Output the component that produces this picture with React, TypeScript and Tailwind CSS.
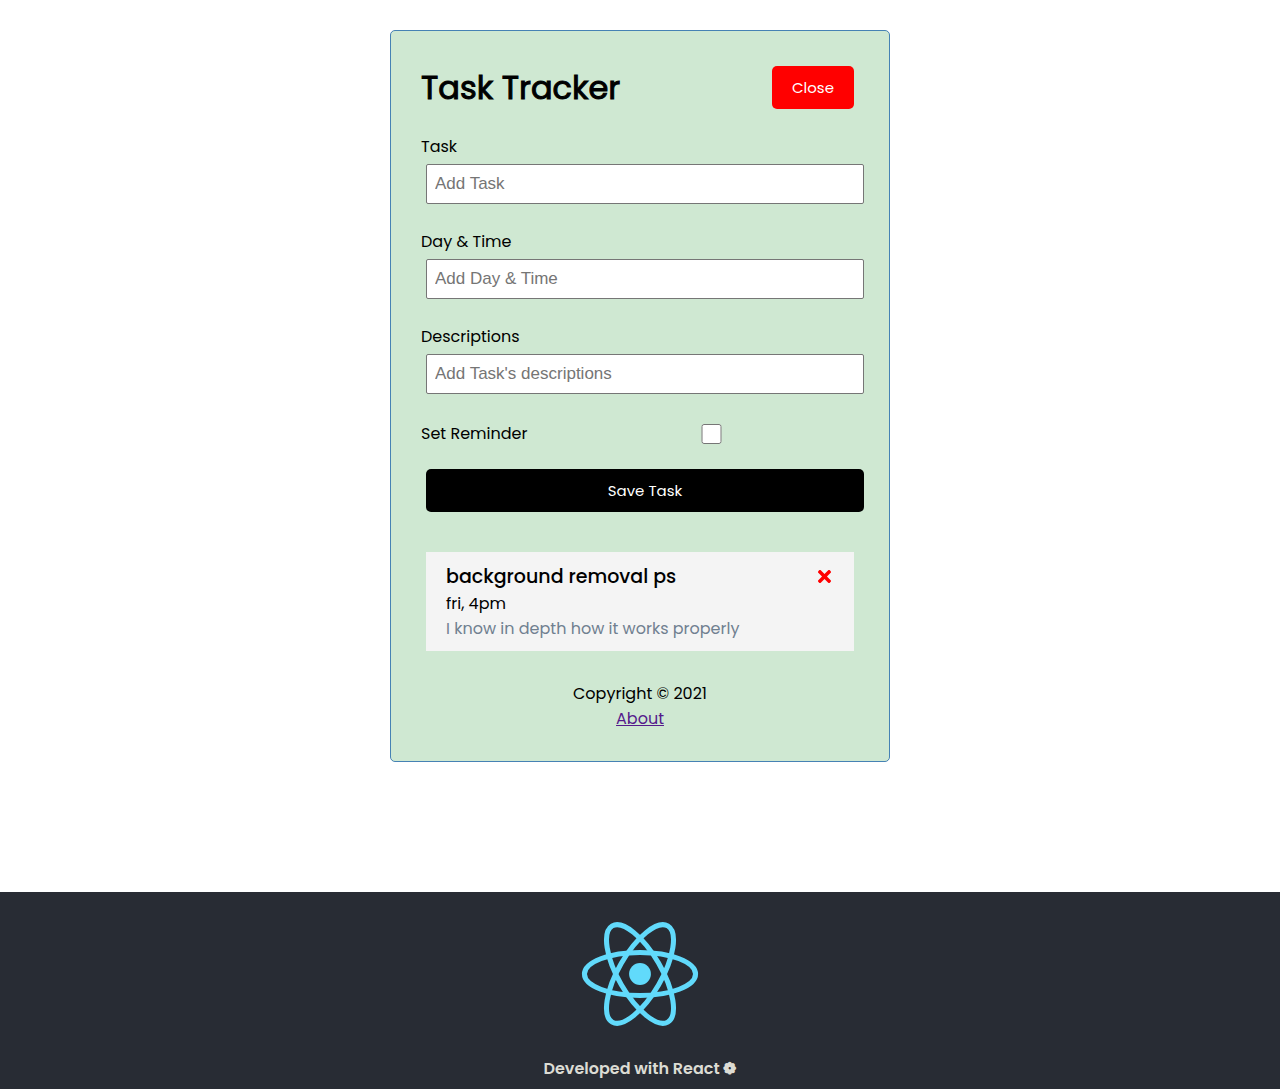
import { useState } from 'react';
import { FaTimes } from 'react-icons/fa';

type FieldProps = { id: string; label: string; placeholder: string };

function Field({ id, label, placeholder }: FieldProps) {
  return (
    <div className="mb-[25px]">
      <label htmlFor={id} className="block leading-[26px]">{label}</label>
      <input
        id={id}
        type="text"
        placeholder={placeholder}
        className="mt-1 ml-[5px] block h-10 w-full rounded-[2px] border border-[#767676] bg-white px-2 font-['Liberation_Sans',sans-serif] text-[17px] placeholder:text-[#757575]"
      />
    </div>
  );
}

function ReactLogo() {
  return (
    <svg viewBox="190 68 462 410" className="h-[104px] w-[118px]" aria-label="React logo" role="img">
      <g fill="none" stroke="#61dafb" strokeWidth="20" transform="translate(421 273)">
        <ellipse rx="219" ry="85" />
        <ellipse rx="219" ry="85" transform="rotate(60)" />
        <ellipse rx="219" ry="85" transform="rotate(120)" />
        <circle r="43" fill="#61dafb" stroke="none" />
      </g>
    </svg>
  );
}

export default function App() {
  const [reminder, setReminder] = useState(false);
  return (
    <div className="font-[Poppins,'Open_Sans',sans-serif] text-base text-black">
      <main className="mx-auto mt-[30px] max-w-[500px] rounded-[5px] border border-[#4682b4] bg-[#cfe8d2] p-[30px]">
        <header className="mb-5 flex items-center justify-between">
          <h1 className="text-[32px] leading-[53px] font-normal [-webkit-text-stroke:1px]">Task Tracker</h1>
          <button type="button" className="m-[5px] rounded-[5px] bg-[#ff0000] px-5 py-[10px] text-[15px] leading-[23px] text-white">Close</button>
        </header>
        <form className="mb-10">
          <Field id="task" label="Task" placeholder="Add Task" />
          <Field id="day" label="Day & Time" placeholder="Add Day & Time" />
          <Field id="desc" label="Descriptions" placeholder="Add Task's descriptions" />
          <div className="mb-5 flex h-[30px] items-center">
            <label htmlFor="reminder" className="flex-1 leading-[26px]">Set Reminder</label>
            <input id="reminder" type="checkbox" checked={reminder} onChange={(e) => setReminder(e.target.checked)} className="mr-[2px] h-5 flex-[2]" />
          </div>
          <button type="button" className="ml-[5px] block w-full rounded-[5px] bg-black px-5 py-[10px] text-[15px] leading-[23px] text-white">Save Task</button>
        </form>
        <article className="m-[5px] bg-[#f4f4f4] px-5 py-[10px]">
          <h3 className="flex items-center justify-between text-[19px] leading-[29px] font-medium">
            background removal ps
            <button type="button" aria-label="Delete task"><FaTimes className="text-[19px] text-[#ff0000]" /></button>
          </h3>
          <p className="leading-[25px]">fri, 4pm</p>
          <p className="leading-[25px] text-[#708090]">I know in depth how it works properly</p>
        </article>
        <footer className="mt-[30px] text-center leading-[25px]">
          <p>Copyright © 2021</p>
          <a href="#about" className="text-[#551a8b] underline">About</a>
        </footer>
      </main>
      <section className="mt-[130px] flex flex-col items-center bg-[#282c34] pt-[30px] pb-2">
        <ReactLogo />
        <p className="mt-[31px] font-semibold text-[#dcdcd4]">Developed with React ❁</p>
      </section>
    </div>
  );
}
